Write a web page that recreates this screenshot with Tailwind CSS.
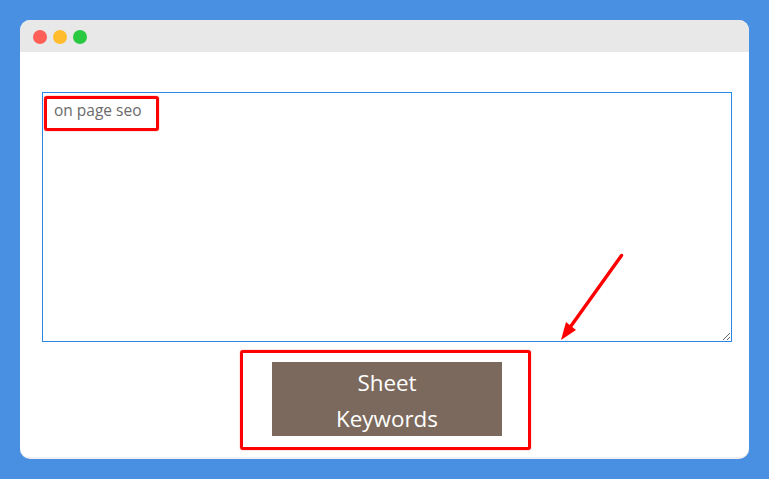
<!DOCTYPE html>
<html lang="en">
<head>
  <meta charset="UTF-8">
  <title>Sheet Keywords</title>
  <script src="https://cdn.jsdelivr.net/npm/@tailwindcss/browser@4"></script>
</head>
<body class="relative w-[769px] h-[479px] overflow-hidden bg-[#4a90e2] p-5 font-['Open_Sans',sans-serif]">
  <!-- window -->
  <div class="w-[729px] h-[439px] bg-white rounded-[10px] overflow-hidden border-b-2 border-[#f0f0f0]">
    <div class="h-8 bg-[#e8e8e8] flex items-center gap-[6px] pl-[13px] pt-[2px]">
      <span class="w-[14px] h-[14px] rounded-full bg-[#ff5f57]"></span>
      <span class="w-[14px] h-[14px] rounded-full bg-[#ffbd2e]"></span>
      <span class="w-[14px] h-[14px] rounded-full bg-[#28c840]"></span>
    </div>
    <div class="pt-10 pl-[22px] pr-[17px] flex flex-col items-center">
      <textarea class="block w-[690px] h-[250px] border border-[#2b87e3] outline-none pt-[7px] pb-[7px] px-[11px] text-[15.5px] leading-[21px] text-[#6b6b6b] font-['Open_Sans',sans-serif]">on page seo</textarea>
      <button class="mt-5 w-[230px] h-[74px] pt-[3px] bg-[#7c695d] text-white text-[22.4px] leading-9 px-10 font-['Open_Sans',sans-serif]">Sheet Keywords</button>
    </div>
  </div>

  <!-- annotations -->
  <div class="absolute left-[44px] top-[96px] w-[115px] h-[35px] border-[3px] border-[#ff0000] rounded-[3px] shadow-[0_0_1px_#ff0000]"></div>
  <div class="absolute left-[240px] top-[350px] w-[291px] h-[100px] border-[3px] border-[#ff0000] rounded-[3px] shadow-[0_0_1px_#ff0000]"></div>
  <svg class="absolute left-0 top-0" width="769" height="479" viewBox="0 0 769 479" fill="none">
    <line x1="621.5" y1="255.5" x2="571" y2="326" stroke="#ff0000" stroke-width="3.4" stroke-linecap="round"/>
    <polygon points="561,340 566,322 576,330" fill="#ff0000"/>
  </svg>
</body>
</html>
